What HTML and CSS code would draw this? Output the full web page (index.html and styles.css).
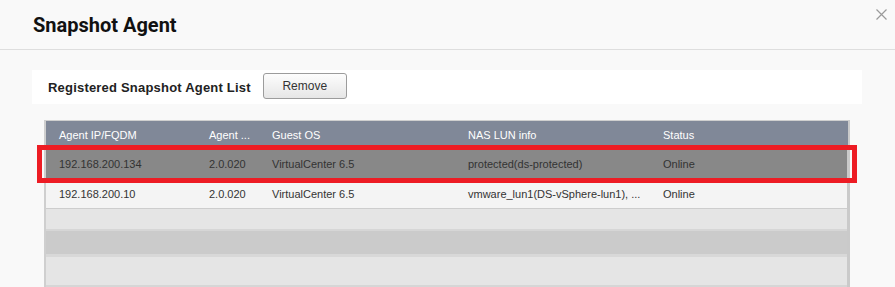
FILE: index.html
```html
<!DOCTYPE html>
<html lang="en">
<head>
    <meta charset="UTF-8">
    <meta name="viewport" content="width=device-width, initial-scale=1.0">
    <title>Snapshot Agent</title>
    <link rel="stylesheet" href="styles.css">
</head>
<body>
    <div class="dialog-head">
        <h1>Snapshot Agent</h1>
        <span class="close-btn" title="Close">
            <svg width="11" height="11" viewBox="0 0 11 11">
                <path d="M0.5 0.5 L10.5 10.5 M10.5 0.5 L0.5 10.5" stroke="#9a9a9a" stroke-width="1.2" fill="none"/>
            </svg>
        </span>
    </div>

    <div class="dialog-body">
        <div class="toolbar">
            <span class="toolbar-label">Registered Snapshot Agent List</span>
            <button class="btn">Remove</button>
        </div>

        <div class="grid">
            <div class="grid-row grid-header">
                <div class="cell">Agent IP/FQDM</div>
                <div class="cell">Agent ...</div>
                <div class="cell">Guest OS</div>
                <div class="cell">NAS LUN info</div>
                <div class="cell">Status</div>
            </div>
            <div class="grid-row selected">
                <div class="cell">192.168.200.134</div>
                <div class="cell">2.0.020</div>
                <div class="cell">VirtualCenter 6.5</div>
                <div class="cell">protected(ds-protected)</div>
                <div class="cell">Online</div>
            </div>
            <div class="grid-row">
                <div class="cell">192.168.200.10</div>
                <div class="cell">2.0.020</div>
                <div class="cell">VirtualCenter 6.5</div>
                <div class="cell">vmware_lun1(DS-vSphere-lun1), ...</div>
                <div class="cell">Online</div>
            </div>
            <div class="empty-row short"></div>
            <div class="empty-row dark"></div>
            <div class="empty-row"></div>
        </div>
    </div>
</body>
</html>
```

FILE: styles.css
```css
html, body {
    overflow: hidden;
}
body {
    margin: 0;
    background: #f9f9f9;
    font-family: "Liberation Sans", Arial, sans-serif;
    color: #333;
}
.dialog-head {
    height: 49px;
    border-bottom: 1px solid #dedede;
    display: flex;
    justify-content: space-between;
    align-items: flex-start;
    padding: 0 8px 0 33px;
}
.dialog-head h1 {
    margin: 0;
    padding-top: 13px;
    font-family: Roboto, "Liberation Sans", sans-serif;
    font-weight: 700;
    font-size: 20px;
    line-height: 24px;
    color: #111;
}
.close-btn {
    margin-top: 9px;
    display: block;
    height: 11px;
    cursor: pointer;
}
.close-btn svg {
    display: block;
}
.dialog-body {
    padding: 20px 33px 0 32px;
}
.toolbar {
    height: 34px;
    background: #fff;
    display: flex;
    align-items: center;
    padding-left: 16px;
}
.toolbar-label {
    font-weight: 700;
    font-size: 13px;
    letter-spacing: 0.2px;
    color: #222;
    margin-right: 12px;
}
.btn {
    width: 84px;
    height: 26px;
    margin-top: -2px;
    border: 1px solid #9c9c9c;
    border-radius: 3px;
    background: linear-gradient(#fdfdfd, #e6e6e6);
    font-family: "Liberation Sans", Arial, sans-serif;
    font-size: 12px;
    color: #333;
    cursor: pointer;
}
.grid {
    margin: 16px 12px 0 12px;
    border-top: 1px solid #cfcfcf;
    border-left: 2px solid #cfcfcf;
    border-right: 2px solid #cacaca;
    background: #cacaca;
    font-size: 11px;
}
.grid-row {
    display: grid;
    grid-template-columns: 150px 63px 196px 195px 1fr;
    height: 30px;
    align-items: center;
    background: #f4f4f4;
    border-bottom: 1px solid #cdcdcd;
    box-sizing: border-box;
    margin-right: 1px;
}
.cell {
    padding-left: 13px;
    white-space: nowrap;
    overflow: hidden;
}
.grid-header {
    height: 28px;
    background: #808898;
    color: #fff;
    border-bottom: none;
    margin-right: 0;
}
.grid-row.selected {
    background: #888888;
    border-bottom: none;
    position: relative;
}
.grid-row.selected::after {
    content: '';
    position: absolute;
    left: -9px;
    right: -10px;
    top: -4px;
    bottom: -4px;
    border: 5px solid #ed1c24;
}
.empty-row {
    height: 28px;
    background: #e5e5e5;
    border-bottom: 2px solid #d6d6d6;
    margin-right: 1px;
}
.empty-row.short {
    height: 20px;
}
.empty-row.dark {
    height: 23px;
    background: #cbcbcb;
    border-bottom: 3px solid #d8d8d8;
}
```
